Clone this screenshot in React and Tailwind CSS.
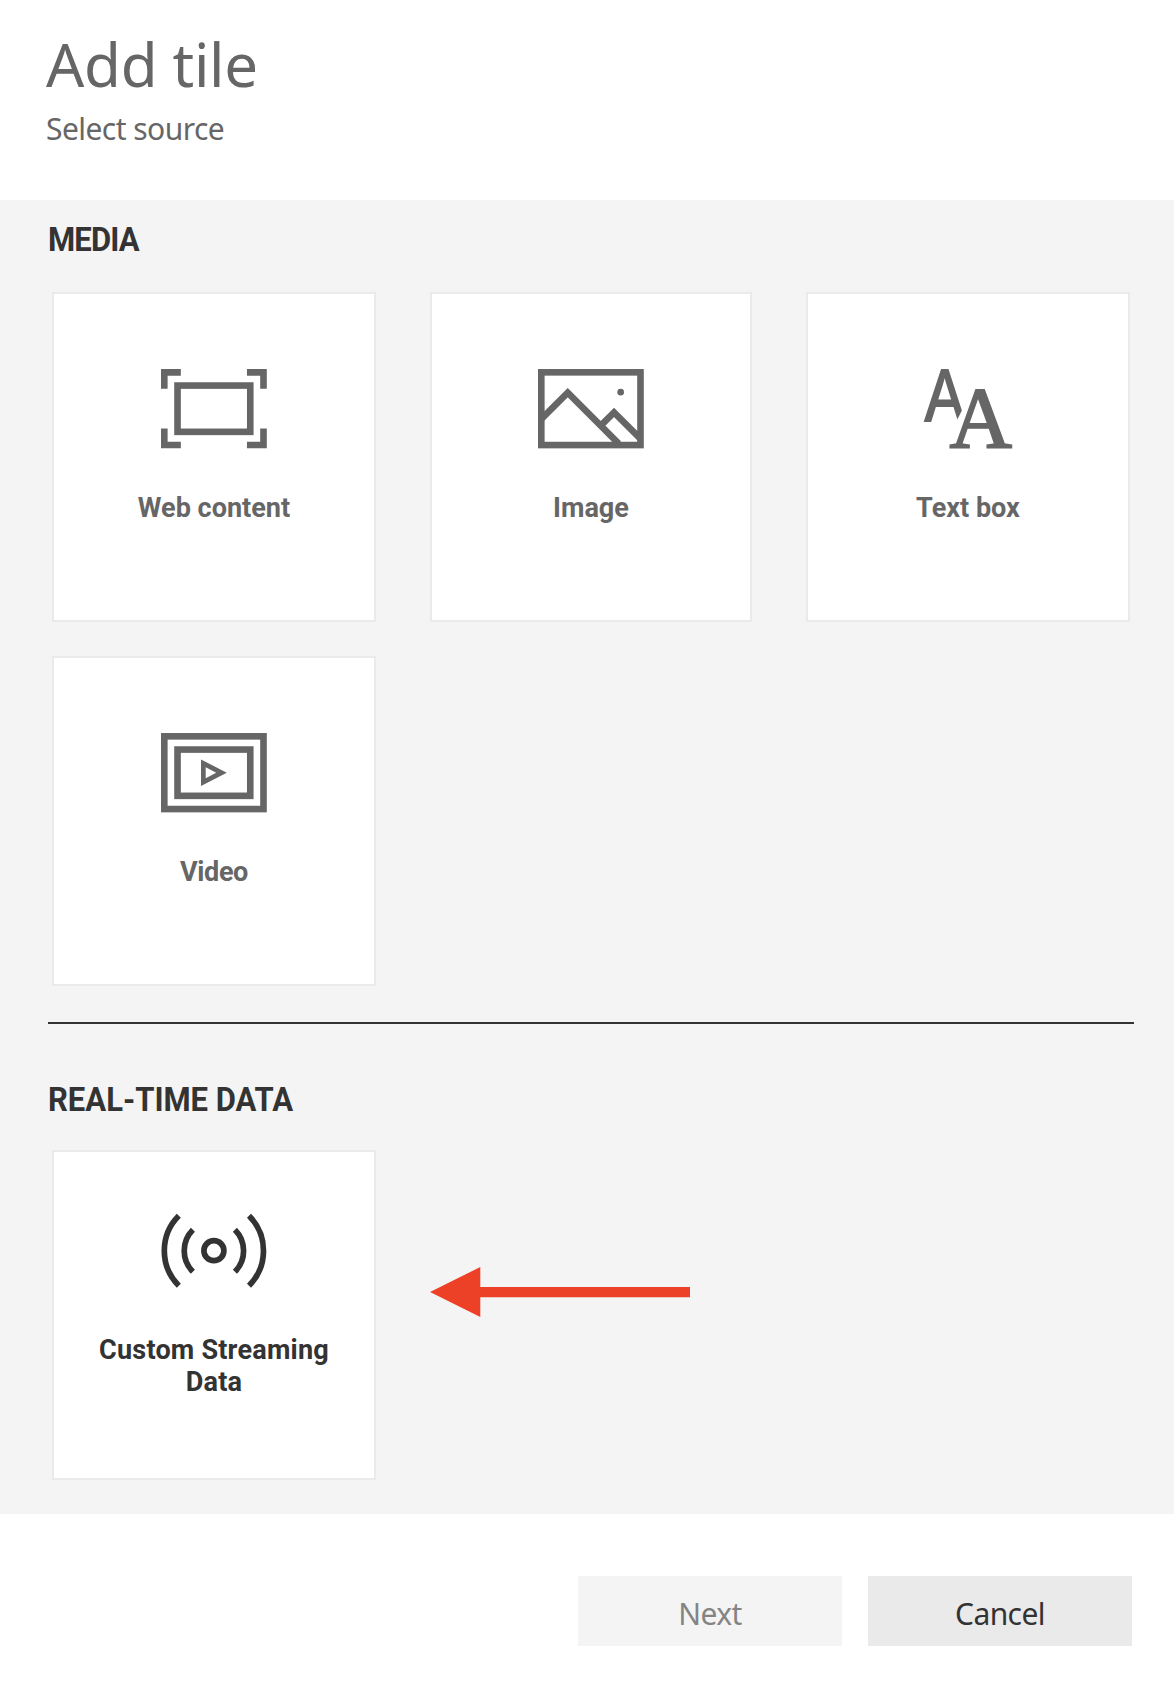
const strokeProps = { fill: 'none', stroke: 'currentColor', strokeWidth: 1 };

function WebContentIcon() {
  return (
    <svg className="h-[79.4px] w-[105.8px]" viewBox="0 0 16 12" {...strokeProps}>
      <path d="M0.5 3V0.5H3M13 0.5h2.5V3M15.5 9v2.5H13M3 11.5H0.5V9" />
      <rect x="2.5" y="2.5" width="11" height="7" />
    </svg>
  );
}

function ImageIcon() {
  return (
    <svg className="h-[79.4px] w-[105.8px]" viewBox="0 0 16 12" {...strokeProps}>
      <rect x="0.5" y="0.5" width="15" height="11" />
      <path d="M0.6 7.47L4.5 3.57L12.2 11.27M9.6 8.45l1.9-1.9l3.9 3.9" />
      <circle cx="12.5" cy="3.5" r="0.5" fill="currentColor" stroke="none" />
    </svg>
  );
}

function TextBoxIcon() {
  return (
    <svg
      className="h-[79.4px] w-[105.8px] overflow-visible"
      viewBox="0 0 105.8 79.4"
      fill="currentColor"
      stroke="currentColor"
    >
      <text
        transform="translate(9.8 52) scale(0.8 1)"
        fontFamily="Liberation Sans"
        fontSize="74.5"
        strokeWidth="2"
      >
        A
      </text>
      {/* clears the small letter's right foot in front of the large letter */}
      <path d="M47.2 41H62V56H39.4z" fill="white" stroke="none" />
      <text x="34.6" y="78.4" fontFamily="Liberation Serif" fontWeight="400" fontSize="86.5" strokeWidth="1.8">
        A
      </text>
    </svg>
  );
}

function VideoIcon() {
  return (
    <svg className="h-[79.4px] w-[105.8px]" viewBox="0 0 16 12" {...strokeProps}>
      <rect x="0.5" y="0.5" width="15" height="11" />
      <rect x="2.5" y="2.5" width="11" height="7" />
      <path
        d="M6.05 4v4L9.95 6zM6.76 5.17L8.35 6L6.76 6.83z"
        fill="currentColor"
        fillRule="evenodd"
        stroke="none"
      />
    </svg>
  );
}

function StreamingIcon() {
  return (
    <svg
      className="h-[79.4px] w-[105.8px]"
      viewBox="-52.9 -39.7 105.8 79.4"
      fill="none"
      stroke="currentColor"
      strokeWidth="5.7"
    >
      <circle r="10" />
      <path d="M-21 -21A29.7 29.7 0 0 0 -21 21M21 -21A29.7 29.7 0 0 1 21 21" />
      <path d="M-35.1 -35A49.5 49.5 0 0 0 -35.1 35M35.1 -35A49.5 49.5 0 0 1 35.1 35" />
    </svg>
  );
}

function Tile({ icon, label, width = 'w-[324px]', tone = 'text-[#666666]', spacing = '' }) {
  return (
    <button
      className={`flex h-[330px] shrink-0 flex-col items-center justify-center border-2 border-[#eaeaea] bg-white pb-[21px] font-['Roboto',sans-serif] ${width} ${tone}`}
    >
      {icon}
      <span
        className={`mt-[43px] w-[250px] scale-x-[0.966] text-center text-[28px] leading-8 font-bold ${spacing}`}
      >
        {label}
      </span>
    </button>
  );
}

function SectionTitle({ children, className = '' }) {
  return (
    <h2
      className={`ml-12 origin-left scale-x-[0.94] font-['Roboto',sans-serif] text-[33px] leading-10 font-bold text-[#333333] ${className}`}
    >
      {children}
    </h2>
  );
}

export default function App() {
  return (
    <div className="flex h-[1696px] w-[1174px] flex-col bg-white font-['Noto_Sans',sans-serif] text-[#666666]">
      <header className="h-[200px] pt-6 pl-[46px]">
        <h1 className="text-[60px] leading-[80px] font-normal tracking-[-0.3px]">Add tile</h1>
        <p className="mt-[5px] text-[30px] leading-10 tracking-[-0.55px]">Select source</p>
      </header>

      <main className="h-[1314px] bg-[#f4f4f4] pt-5">
        <SectionTitle className="tracking-[-0.9px]">MEDIA</SectionTitle>
        <div className="mt-8 ml-[52px] flex w-[1078px] flex-wrap justify-between gap-y-[34px]">
          <Tile icon={<WebContentIcon />} label="Web content" />
          <Tile icon={<ImageIcon />} label="Image" width="w-[322px]" />
          <Tile icon={<TextBoxIcon />} label="Text box" />
          <Tile icon={<VideoIcon />} label="Video" spacing="tracking-[-0.4px]" />
        </div>
        <hr className="mt-9 mr-10 ml-12 border-t-2 border-[#333333]" />
        <SectionTitle className="mt-14">REAL-TIME DATA</SectionTitle>
        <div className="mt-[30px] ml-[52px] flex">
          <Tile
            icon={<StreamingIcon />}
            label="Custom Streaming Data"
            tone="text-[#333333]"
            spacing="tracking-[0.2px]"
          />
          <svg className="mt-[117px] ml-[54px] h-[50px] w-[260px]" viewBox="0 0 260 50" fill="#ec4127">
            <path d="M0 25L50.3 0V20H260V30.2H50.3V50z" />
          </svg>
        </div>
      </main>

      <footer className="mt-[62px] mr-[42px] flex justify-end gap-[26px] text-[30px] tracking-[-0.6px]">
        <button className="h-[70px] w-[264px] bg-[#f4f4f4] pt-1 text-[#848484]">Next</button>
        <button className="h-[70px] w-[264px] bg-[#eaeaea] pt-1 text-[#333333]">Cancel</button>
      </footer>
    </div>
  );
}
